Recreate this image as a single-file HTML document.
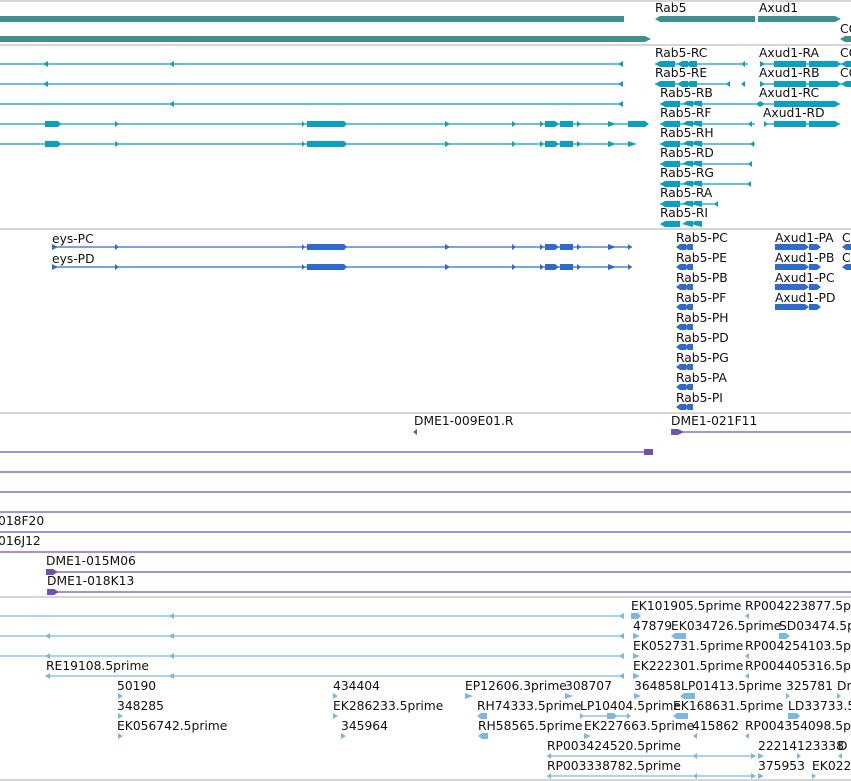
<!DOCTYPE html>
<html><head><meta charset="utf-8"><style>
html,body{margin:0;padding:0;background:#fff;width:851px;height:781px;overflow:hidden}
svg{display:block}
text{font-family:"DejaVu Sans","Liberation Sans",sans-serif;font-size:12.3px;fill:#111}
</style></head><body>
<svg width="851" height="781" viewBox="0 0 851 781">
<g stroke="#c8c8c8" stroke-width="1.5">
<line x1="0" y1="1" x2="851" y2="1"/><line x1="0" y1="45" x2="851" y2="45"/>
<line x1="0" y1="229" x2="851" y2="229"/><line x1="0" y1="413" x2="851" y2="413"/>
<line x1="0" y1="597" x2="851" y2="597"/><line x1="0" y1="780" x2="851" y2="780"/>
</g>
<g fill="#3f8f8f">
<rect x="0" y="16" width="624" height="6"/>
<polygon points="655,19 660,16 755,16 755,22 660,22"/>
<polygon points="758,16 835,16 841,19 835,22 758,22"/>
<polygon points="0,36 645,36 651,39 645,42 0,42"/>
<polygon points="840,39 845,36 851,36 851,42 845,42"/>
</g>
<text x="655" y="12">Rab5</text><text x="759" y="12">Axud1</text><text x="840" y="33">CG</text>
<g stroke="#0aa0c0" stroke-width="1.3" fill="none">
<line x1="0" y1="64" x2="622" y2="64"/><line x1="0" y1="84" x2="622" y2="84"/>
<line x1="0" y1="104" x2="622" y2="104"/><line x1="0" y1="124" x2="648" y2="124"/>
<line x1="0" y1="144" x2="636" y2="144"/>
<line x1="655" y1="64" x2="748" y2="64"/><line x1="655" y1="84" x2="730" y2="84"/>
<line x1="660" y1="104" x2="758" y2="104"/><line x1="660" y1="124" x2="755" y2="124"/>
<line x1="660" y1="144" x2="755" y2="144"/><line x1="660" y1="164" x2="752" y2="164"/>
<line x1="660" y1="184" x2="751" y2="184"/><line x1="660" y1="204" x2="718" y2="204"/>
<line x1="760" y1="64" x2="851" y2="64"/><line x1="760" y1="84" x2="851" y2="84"/>
<line x1="760" y1="104" x2="840" y2="104"/><line x1="764" y1="124" x2="840" y2="124"/>
</g>
<g fill="#0aa0c0">
<polygon points="43,64 48,61 48,67"/><polygon points="169,64 174,61 174,67"/><polygon points="618,64 623,61 623,67"/>
<polygon points="43,84 48,81 48,87"/><polygon points="618,84 623,81 623,87"/>
<polygon points="169,104 174,101 174,107"/><polygon points="618,104 623,101 623,107"/>
<rect x="45" y="121" width="13" height="6"/><polygon points="58,121 61,124 58,127"/>
<rect x="45" y="141" width="13" height="6"/><polygon points="58,141 61,144 58,147"/>
<polygon points="115,121 119,124 115,127"/><polygon points="115,141 119,144 115,147"/>
<rect x="307" y="121" width="37" height="6"/><polygon points="344,121 347,124 344,127"/><polygon points="302,121 305,124 302,127"/>
<rect x="307" y="141" width="37" height="6"/><polygon points="344,141 347,144 344,147"/><polygon points="302,141 305,144 302,147"/>
<polygon points="445,121 450,124 445,127"/><polygon points="445,141 450,144 445,147"/>
<polygon points="512,121 516,124 512,127"/><polygon points="512,141 516,144 512,147"/>
<rect x="545" y="121" width="10" height="6"/><rect x="560" y="121" width="13" height="6"/><polygon points="540,121 544,124 540,127"/><polygon points="555,121 559,124 555,127"/><polygon points="577,121 581,124 577,127"/>
<rect x="545" y="141" width="10" height="6"/><rect x="560" y="141" width="13" height="6"/><polygon points="540,141 544,144 540,147"/><polygon points="555,141 559,144 555,147"/><polygon points="577,141 581,144 577,147"/>
<polygon points="608,121 616,124 608,127"/><polygon points="608,141 616,144 608,147"/>
<polygon points="628,121 645,121 649,124 645,127 628,127"/><polygon points="628,141 636,144 628,147"/>
</g>
<g id="rabg" fill="#0aa0c0">
<polygon points="655,64 660,61 675,61 675,67 660,67"/><polygon points="677,64 682,61 688,61 688,67 682,67"/><polygon points="686,64 690,61 697,61 697,67 690,67"/><polygon points="741,64 745,61 745,67"/>
</g>
<g fill="#0aa0c0">
<use href="#rabg" y="20"/>
<polygon points="660,104 665,101 680,101 680,107 665,107"/><polygon points="682,104 687,101 693,101 693,107"/><polygon points="691,104 695,101 702,101 702,107"/>
<polygon points="660,124 665,121 680,121 680,127 665,127"/><polygon points="682,124 687,121 693,121 693,127"/><polygon points="691,124 695,121 702,121 702,127"/>
<polygon points="660,144 665,141 680,141 680,147 665,147"/><polygon points="682,144 687,141 693,141 693,147"/><polygon points="691,144 695,141 702,141 702,147"/>
<polygon points="660,164 665,161 680,161 680,167 665,167"/><polygon points="682,164 687,161 693,161 693,167"/><polygon points="691,164 695,161 702,161 702,167"/>
<polygon points="660,184 665,181 680,181 680,187 665,187"/><polygon points="682,184 687,181 693,181 693,187"/><polygon points="691,184 695,181 702,181 702,187"/>
<polygon points="660,204 665,201 680,201 680,207 665,207"/><polygon points="682,204 687,201 693,201 693,207"/><polygon points="691,204 695,201 702,201 702,207"/>
<polygon points="660,224 665,221 680,221 680,227 665,227"/><polygon points="682,224 687,221 693,221 693,227"/><polygon points="691,224 695,221 702,221 702,227"/>
<polygon points="748,124 752,121 752,127"/><polygon points="750,144 754,141 754,147"/><polygon points="748,164 752,161 752,167"/><polygon points="747,184 751,181 751,187"/><polygon points="714,204 718,201 718,207"/><polygon points="726,84 730,81 730,87"/>
<polygon points="756,104 760,101 760,107"/>
<polygon points="760,61 765,64 760,67"/><rect x="774" y="61" width="32" height="6"/><rect x="809" y="61" width="28" height="6"/><polygon points="837,61 841,64 837,67"/><polygon points="841,64 846,61 851,61 851,67 846,67"/>
<polygon points="760,81 765,84 760,87"/><rect x="774" y="81" width="32" height="6"/><rect x="809" y="81" width="28" height="6"/><polygon points="837,81 841,84 837,87"/><polygon points="841,84 846,81 851,81 851,87 846,87"/>
<polygon points="760,101 765,104 760,107"/><rect x="774" y="101" width="32" height="6"/><polygon points="806,101 811,101 835,101 840,104 835,107 806,107"/>
<polygon points="764,121 768,124 764,127"/><rect x="774" y="121" width="32" height="6"/><polygon points="809,121 835,121 840,124 835,127 809,127"/>
</g>
<text x="655" y="57">Rab5-RC</text><text x="655" y="77">Rab5-RE</text>
<text x="660" y="97">Rab5-RB</text><text x="660" y="117">Rab5-RF</text><text x="660" y="137">Rab5-RH</text>
<text x="660" y="157">Rab5-RD</text><text x="660" y="177">Rab5-RG</text><text x="660" y="197">Rab5-RA</text><text x="660" y="217">Rab5-RI</text>
<text x="759" y="57">Axud1-RA</text><text x="759" y="77">Axud1-RB</text><text x="759" y="97">Axud1-RC</text><text x="763" y="117">Axud1-RD</text>
<text x="840" y="57">CG</text><text x="840" y="77">CG</text>
<g stroke="#2f6acc" stroke-width="1.3"><line x1="52" y1="247" x2="632" y2="247"/><line x1="52" y1="267" x2="632" y2="267"/></g>
<g id="eys" fill="#2f6acc">
<polygon points="52,244 58,247 52,250"/><polygon points="115,244 119,247 115,250"/>
<polygon points="302,244 305,247 302,250"/><polygon points="307,244 344,244 347,247 344,250 307,250"/>
<polygon points="445,244 450,247 445,250"/><polygon points="512,244 516,247 512,250"/>
<polygon points="540,244 544,247 540,250"/><rect x="545" y="244" width="10" height="6"/><polygon points="555,244 559,247 555,250"/><rect x="560" y="244" width="13" height="6"/><polygon points="577,244 581,247 577,250"/>
<polygon points="608,244 616,247 608,250"/><polygon points="628,244 632,247 628,250"/>
</g>
<use href="#eys" y="20"/>
<g id="rp" fill="#2f6acc"><polygon points="676,247 680,244 686,244 686,250 680,250"/><polygon points="684,247 688,244 693,244 693,250 688,250"/></g>
<use href="#rp" y="20"/><use href="#rp" y="40"/><use href="#rp" y="60"/><use href="#rp" y="80"/><use href="#rp" y="100"/><use href="#rp" y="120"/><use href="#rp" y="140"/><use href="#rp" y="160"/>
<g id="ap" fill="#2f6acc"><polygon points="775,244 805,244 809,247 805,250 775,250"/><polygon points="809,244 817,244 821,247 817,250 809,250"/></g>
<use href="#ap" y="20"/><use href="#ap" y="40"/><use href="#ap" y="60"/>
<g fill="#2f6acc"><polygon points="842,247 846,244 851,244 851,250 846,250"/><polygon points="842,267 846,264 851,264 851,270 846,270"/></g>
<text x="52" y="243">eys-PC</text><text x="52" y="263">eys-PD</text>
<text x="676" y="242">Rab5-PC</text><text x="676" y="262">Rab5-PE</text><text x="676" y="282">Rab5-PB</text><text x="676" y="302">Rab5-PF</text><text x="676" y="322">Rab5-PH</text><text x="676" y="342">Rab5-PD</text><text x="676" y="362">Rab5-PG</text><text x="676" y="382">Rab5-PA</text><text x="676" y="402">Rab5-PI</text>
<text x="775" y="242">Axud1-PA</text><text x="775" y="262">Axud1-PB</text><text x="775" y="282">Axud1-PC</text><text x="775" y="302">Axud1-PD</text>
<text x="842" y="242">C</text><text x="842" y="262">C</text>
<g stroke="#7050b0" stroke-width="1.3">
<line x1="0" y1="452" x2="650" y2="452"/><line x1="0" y1="472" x2="851" y2="472"/><line x1="0" y1="492" x2="851" y2="492"/>
<line x1="0" y1="512" x2="851" y2="512"/><line x1="0" y1="532" x2="851" y2="532"/><line x1="0" y1="552" x2="851" y2="552"/>
<line x1="46" y1="572" x2="851" y2="572"/><line x1="47" y1="592" x2="851" y2="592"/><line x1="671" y1="432" x2="851" y2="432"/>
</g>
<g fill="#7050b0">
<rect x="644" y="449" width="9" height="6"/><polygon points="413,432 417,429 417,435"/>
<polygon points="671,429 678,429 684,432 678,435 671,435"/>
<polygon points="46,569 53,569 58,572 53,575 46,575"/><polygon points="47,589 54,589 59,592 54,595 47,595"/>
</g>
<text x="414" y="425">DME1-009E01.R</text><text x="671" y="425">DME1-021F11</text>
<text x="-2" y="525">018F20</text><text x="-2" y="545">016J12</text>
<text x="46" y="565">DME1-015M06</text><text x="47" y="585">DME1-018K13</text>
<g stroke="#7ab8e0" stroke-width="1.3">
<line x1="0" y1="616" x2="624" y2="616"/><line x1="0" y1="636" x2="624" y2="636"/><line x1="0" y1="656" x2="624" y2="656"/><line x1="46" y1="676" x2="624" y2="676"/>
<line x1="581" y1="716" x2="630" y2="716"/><line x1="547" y1="756" x2="755" y2="756"/><line x1="547" y1="776" x2="755" y2="776"/>
</g>
<g fill="#7ab8e0">
<polygon points="169,616 174,613 174,619"/><polygon points="619,616 624,613 624,619"/>
<polygon points="45,636 50,633 50,639"/><polygon points="169,636 174,633 174,639"/><polygon points="619,636 624,633 624,639"/>
<polygon points="45,656 50,653 50,659"/><polygon points="169,656 174,653 174,659"/><polygon points="619,656 624,653 624,659"/>
<polygon points="45,676 50,673 50,679"/><polygon points="169,676 174,673 174,679"/><polygon points="619,676 624,673 624,679"/>
<polygon points="631,613 638,613 641,616 638,619 631,619"/><polygon points="745,616 749,613 749,619"/>
<polygon points="633,633 640,636 633,639"/><polygon points="671,636 675,633 686,633 686,639 675,639"/><polygon points="779,633 786,633 790,636 786,639 779,639"/>
<polygon points="633,653 640,656 633,659"/><polygon points="745,656 749,653 749,659"/>
<polygon points="633,673 640,676 633,679"/><polygon points="745,676 749,673 749,679"/>
<polygon points="118,693 123,696 118,699"/><polygon points="333,693 338,696 333,699"/><polygon points="465,693 473,696 465,699"/><polygon points="565,693 573,696 565,699"/><polygon points="634,693 641,696 634,699"/><polygon points="680,696 684,693 695,693 695,699 684,699"/><polygon points="786,693 790,696 786,699"/><polygon points="837,693 841,696 837,699"/>
<polygon points="118,713 123,716 118,719"/><polygon points="333,713 338,716 333,719"/><polygon points="477,716 481,713 487,713 487,719 481,719"/><polygon points="580,713 584,716 580,719"/><polygon points="607,713 614,713 617,716 614,719 607,719"/><polygon points="627,713 631,716 627,719"/><polygon points="673,716 677,713 688,713 688,719 677,719"/><polygon points="788,713 797,713 800,716 797,719 788,719"/>
<polygon points="118,733 123,736 118,739"/><polygon points="341,733 346,736 341,739"/><polygon points="478,736 482,733 488,733 488,739 482,739"/><polygon points="584,733 591,736 584,739"/><polygon points="693,736 697,733 697,739"/><polygon points="745,736 749,733 749,739"/>
<polygon points="547,756 551,753 551,759"/><polygon points="693,756 697,753 697,759"/><polygon points="751,753 756,756 751,759"/><polygon points="758,753 764,756 758,759"/><polygon points="797,753 801,756 797,759"/><polygon points="838,756 842,753 842,759"/>
<polygon points="547,776 551,773 551,779"/><polygon points="693,776 697,773 697,779"/><polygon points="751,773 756,776 751,779"/><polygon points="758,773 764,776 758,779"/><polygon points="812,773 816,776 812,779"/>
</g>
<text x="631" y="610">EK101905.5prime</text><text x="745" y="610">RP004223877.5prime</text>
<text x="633" y="630">47879</text><text x="671" y="630">EK034726.5prime</text><text x="779" y="630">SD03474.5prime</text>
<text x="633" y="650">EK052731.5prime</text><text x="745" y="650">RP004254103.5prime</text>
<text x="46" y="670">RE19108.5prime</text><text x="633" y="670">EK222301.5prime</text><text x="745" y="670">RP004405316.5prime</text>
<text x="117" y="690">50190</text><text x="333" y="690">434404</text><text x="465" y="690">EP12606.3prime</text><text x="565" y="690">308707</text><text x="634" y="690">364858</text><text x="681" y="690">LP01413.5prime</text><text x="786" y="690">325781</text><text x="837" y="690">Dm</text>
<text x="117" y="710">348285</text><text x="333" y="710">EK286233.5prime</text><text x="477" y="710">RH74333.5prime</text><text x="580" y="710">LP10404.5prime</text><text x="673" y="710">EK168631.5prime</text><text x="788" y="710">LD33733.5</text>
<text x="117" y="730">EK056742.5prime</text><text x="341" y="730">345964</text><text x="478" y="730">RH58565.5prime</text><text x="584" y="730">EK227663.5prime</text><text x="692" y="730">415862</text><text x="745" y="730">RP004354098.5prime</text>
<text x="547" y="750">RP003424520.5prime</text><text x="758" y="750">22214</text><text x="797" y="750">123338</text><text x="838" y="750">D</text>
<text x="547" y="770">RP003338782.5prime</text><text x="758" y="770">375953</text><text x="812" y="770">EK022</text>
</svg>
</body></html>
